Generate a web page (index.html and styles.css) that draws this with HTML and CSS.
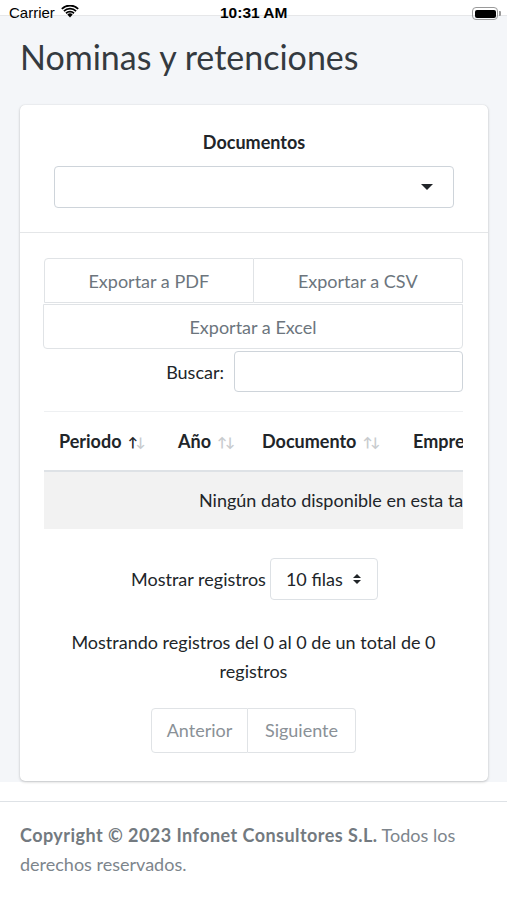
FILE: index.html
```html
<!DOCTYPE html>
<html lang="es">
<head>
<meta charset="utf-8">
<title>Nominas y retenciones</title>
<link rel="stylesheet" href="styles.css">
</head>
<body>
<div class="statusbar">
  <span class="carrier">Carrier
    <svg class="wifi" width="18" height="13" viewBox="0 0 18 13"><path d="M9 12.5 L6.3 9.6 A3.9 3.9 0 0 1 11.7 9.6 Z" fill="#000"/><path d="M4.4 7.6 A6.6 6.6 0 0 1 13.6 7.6 L12.4 8.9 A4.9 4.9 0 0 0 5.6 8.9 Z" fill="#000"/><path d="M2.3 5.4 A9.6 9.6 0 0 1 15.7 5.4 L14.5 6.7 A7.9 7.9 0 0 0 3.5 6.7 Z" fill="#000"/><path d="M0.2 3.2 A12.6 12.6 0 0 1 17.8 3.2 L16.6 4.5 A10.9 10.9 0 0 0 1.4 4.5 Z" fill="#000"/></svg>
  </span>
  <span class="clock">10:31 AM</span>
  <span class="battery"><span class="batt-body"><span class="batt-fill"></span></span><span class="batt-tip"></span></span>
</div>
<div class="topband"></div>
<main class="content">
  <h1 class="page-title">Nominas y retenciones</h1>
  <section class="card">
    <div class="card-header">
      <label class="doc-label">Documentos</label>
      <div class="select-box"><span class="caret"></span></div>
    </div>
    <div class="card-body">
      <div class="btn-grid">
        <button class="btn">Exportar a PDF</button>
        <button class="btn">Exportar a CSV</button>
        <button class="btn btn-wide">Exportar a Excel</button>
      </div>
      <div class="search-row">
        <span class="search-label">Buscar:</span>
        <div class="search-input"></div>
      </div>
      <div class="table-wrap">
        <table class="data-table">
          <thead>
            <tr>
              <th class="c-periodo">Periodo <span class="sort"><span class="up on">↑</span><span class="down">↓</span></span></th>
              <th class="c-anio">Año <span class="sort"><span class="up">↑</span><span class="down">↓</span></span></th>
              <th class="c-doc">Documento <span class="sort"><span class="up">↑</span><span class="down">↓</span></span></th>
              <th class="c-emp">Empresa <span class="sort"><span class="up">↑</span><span class="down">↓</span></span></th>
            </tr>
          </thead>
          <tbody>
            <tr class="empty-row"><td colspan="4"><span class="empty-text">Ningún dato disponible en esta tabla</span></td></tr>
          </tbody>
        </table>
      </div>
      <div class="length-row">
        <span>Mostrar registros</span>
        <div class="length-select">10 filas <span class="updown"><span class="tri-up"></span><span class="tri-down"></span></span></div>
      </div>
      <p class="info">Mostrando registros del 0 al 0 de un total de 0 registros</p>
      <div class="pager">
        <span class="page-btn">Anterior</span>
        <span class="page-btn">Siguiente</span>
      </div>
    </div>
  </section>
</main>
<footer class="footer">
  <p class="footer-text"><strong>Copyright © 2023 Infonet Consultores S.L.</strong> Todos los derechos reservados.</p>
</footer>
</body>
</html>
```
FILE: styles.css
```css
* { box-sizing: border-box; }
html, body { margin: 0; padding: 0; }
body {
  width: 507px;
  height: 900px;
  overflow: hidden;
  background: #ffffff;
  font-family: "Lato", "Liberation Sans", sans-serif;
  color: #212529;
  position: relative;
}
.statusbar {
  position: absolute;
  top: 0; left: 0; right: 0;
  height: 28px;
  font-family: "Liberation Sans", "DejaVu Sans", sans-serif;
  font-size: 15px;
  color: #000;
  z-index: 5;
}
.carrier { position: absolute; left: 9px; top: 4px; display: flex; align-items: center; gap: 6px; }
.wifi { margin-top: -2px; }
.clock { position: absolute; left: 220px; top: 4px; font-weight: bold; font-size: 15.5px; }
.battery { position: absolute; left: 472px; top: 7px; display: flex; align-items: center; }
.batt-body { width: 26px; height: 13px; border: 1px solid #9a9a9a; border-radius: 4px; padding: 1.5px; display: block; }
.batt-fill { display: block; width: 100%; height: 100%; background: #000; border-radius: 2px; }
.batt-tip { width: 2px; height: 5px; background: #9a9a9a; border-radius: 0 1px 1px 0; margin-left: 1px; display: block; }
.topband { height: 16px; background: #fff; border-bottom: 1px solid #e6e7e9; }
.content {
  background: #f4f6f9;
  padding: 19px 19px 1px 20px;
}
.page-title {
  margin: 0 0 26px 0;
  font-weight: 400;
  font-size: 34px;
  line-height: 44px;
  color: #343a40;
}
.card {
  background: #fff;
  border-radius: 5px;
  box-shadow: 0 0 1px rgba(0,0,0,.13), 0 1px 3px rgba(0,0,0,.2);
  margin-bottom: 0;
}
.card-header {
  padding: 25px 34px 24px;
  border-bottom: 1px solid #e4e6e8;
  display: flex;
  flex-direction: column;
  align-items: center;
}
.doc-label { font-weight: 700; font-size: 18px; line-height: 24px; margin-bottom: 12px; color: #212529; }
.select-box {
  width: 100%;
  height: 42px;
  border: 1px solid #ced4da;
  border-radius: 4px;
  display: flex;
  align-items: center;
  justify-content: flex-end;
  padding-right: 20px;
}
.caret { width: 0; height: 0; border-left: 6px solid transparent; border-right: 6px solid transparent; border-top: 6px solid #212529; }
.card-body { padding: 25px 25px 28px 24px; }
.btn-grid { display: grid; grid-template-columns: 1fr 1fr; }
.btn {
  font-family: inherit;
  font-size: 18px;
  color: #6c757d;
  background: #fff;
  border: 1px solid #e0e3e6;
  height: 45px;
  margin: 0;
  padding: 0;
}
.btn:first-child { border-radius: 4px 0 0 0; }
.btn:nth-child(2) { border-left: none; border-radius: 0 4px 0 0; }
.btn-wide { grid-column: 1 / 3; margin-top: 1px; margin-left: -1px; border-radius: 0 0 4px 4px; }
.search-row { display: flex; justify-content: flex-end; align-items: center; gap: 10px; margin-top: 2px; }
.search-label { font-size: 18px; color: #212529; }
.search-input { width: 229px; height: 41px; border: 1px solid #ced4da; border-radius: 4px; }
.table-wrap { overflow: hidden; margin-top: 19px; }
.data-table { border-collapse: collapse; width: 560px; white-space: nowrap; }
.data-table th {
  text-align: left;
  font-weight: 700;
  font-size: 18px;
  height: 59px;
  padding: 0 0 0 15px;
  border-top: 1px solid #eef0f2;
  border-bottom: 2px solid #dee2e6;
  color: #212529;
}
.c-periodo { width: 119px; }
.c-anio { width: 84px; }
.c-doc { width: 151px; }
.sort { font-size: 13px; font-weight: 700; letter-spacing: -2px; margin-left: 2px; position: relative; top: -1px; }
.sort .up, .sort .down { color: #c8cbce; }
.sort .on { color: #212529; }
.empty-row td { background: #f2f2f2; height: 58px; font-size: 18px; color: #212529; padding-left: 155px; }
.length-row { display: flex; justify-content: center; align-items: center; gap: 4px; margin-top: 29px; font-size: 18px; padding-left: 2px; }
.length-select {
  height: 42px;
  width: 108px;
  border: 1px solid #dde1e5;
  border-radius: 4px;
  display: flex;
  align-items: center;
  padding-left: 15px;
  gap: 10px;
  color: #212529;
}
.updown { display: flex; flex-direction: column; gap: 2px; }
.tri-up { width: 0; height: 0; border-left: 4px solid transparent; border-right: 4px solid transparent; border-bottom: 4px solid #212529; }
.tri-down { width: 0; height: 0; border-left: 4px solid transparent; border-right: 4px solid transparent; border-top: 4px solid #212529; }
.info { text-align: center; font-size: 18px; line-height: 29px; margin: 28px 0 0; padding: 0 6px; color: #212529; }
.pager { display: flex; justify-content: center; margin-top: 22px; }
.page-btn {
  display: flex; align-items: center; justify-content: center;
  height: 45px;
  font-size: 18px;
  color: #8a9197;
  border: 1px solid #e0e3e6;
}
.page-btn:first-child { width: 97px; border-radius: 4px 0 0 4px; }
.page-btn:last-child { width: 108px; border-left: none; border-radius: 0 4px 4px 0; }
.footer {
  margin-top: 19px;
  border-top: 1px solid #dee2e6;
  padding: 19px 20px;
}
.footer-text {
  margin: 0;
  font-size: 18px;
  line-height: 29px;
  color: #7d858c;
}
.footer-text strong { color: #737a80; letter-spacing: 0.45px; }
```
